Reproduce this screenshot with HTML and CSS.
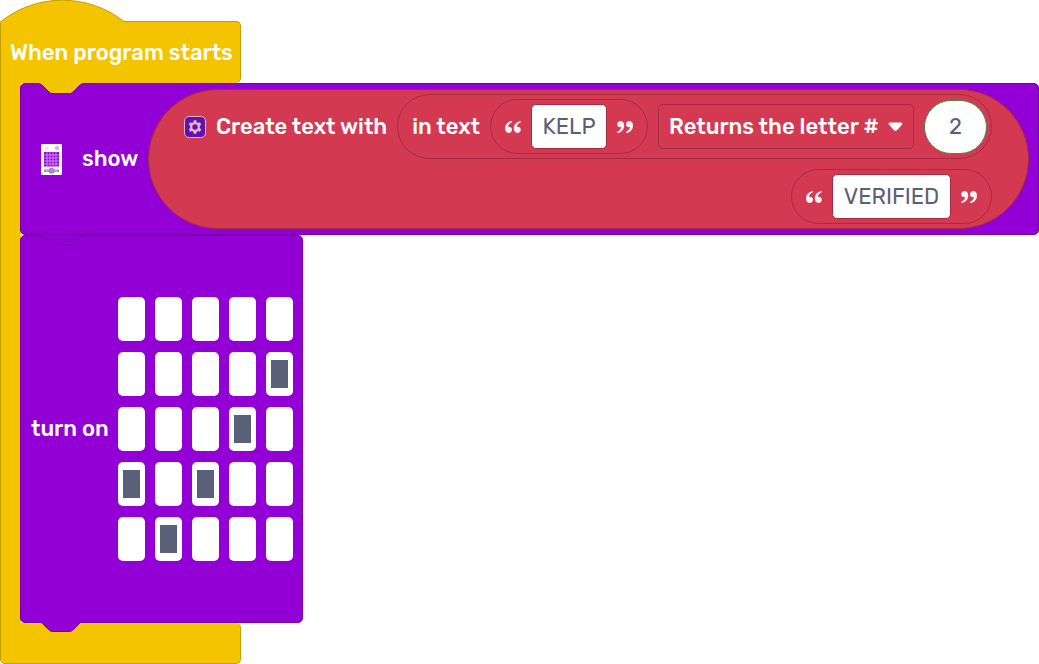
FILE: index.html
```html
<!DOCTYPE html>
<html lang="en">
<head>
<meta charset="utf-8">
<title>Block program</title>
<link rel="stylesheet" href="styles.css">
</head>
<body>
<svg class="symbols" width="0" height="0" aria-hidden="true">
  <symbol id="quote" viewBox="0 0 16 12">
    <path d="M6.800 0C2.600 .8 0 3.500 0 7.600C0 10.300 1.400 12 3.600 12C5.600 12 7 10.700 7 8.800C7 7 5.700 5.800 3.900 5.800C3.600 5.800 3.300 5.800 3 5.900C3.400 3.700 4.700 2.200 7.200 1.100Z"/>
    <path d="M15.600 0C11.400 .8 8.800 3.500 8.800 7.600C8.800 10.300 10.200 12 12.400 12C14.400 12 15.800 10.700 15.800 8.800C15.800 7 14.500 5.800 12.700 5.800C12.400 5.800 12.100 5.800 11.800 5.900C12.200 3.700 13.500 2.200 16 1.100Z"/>
  </symbol>
  <symbol id="tab" viewBox="0 0 48 12">
    <path stroke="none" d="M0 0V0.500C4 0.500 5 2 7 4L11 8C13 10 14 10.500 16 10.500H32C34 10.500 35 10 37 8L41 4C43 2 44 0.500 48 0.500V0Z"/>
    <path fill="none" d="M0 0.500C4 0.500 5 2 7 4L11 8C13 10 14 10.500 16 10.500H32C34 10.500 35 10 37 8L41 4C43 2 44 0.500 48 0.500"/>
  </symbol>
</svg>
<main class="program">
  <svg class="cap" width="126" height="23" viewBox="0 0 126 23" aria-hidden="true">
    <path class="cap-fill" d="M0 23V22C36 -7 88 -7 124 21.500H126V23Z"/>
    <path class="cap-line" d="M0.500 22C36 -7 88 -7 124 21.500H126"/>
  </svg>
  <header class="hat">When program starts</header>
  <div class="stack">
    <section class="block block-show">
      <svg class="tab tab-start" width="48" height="12" aria-hidden="true"><use href="#tab"/></svg>
      <svg class="device" width="21" height="31" viewBox="0 0 21 31" role="img" aria-label="LED device">
        <rect width="21" height="31" rx="1" fill="#fff"/>
        <rect x="4" y="2.500" width="3.500" height="3.500" fill="#e6e6e6"/>
        <circle cx="16" cy="4" r="1.700" fill="#d9b3ee" stroke="#aaa" stroke-width=".6"/>
        <rect x="3" y="8" width="15" height="14.500" fill="#9400d8"/>
        <path d="M6 8v14.500M9 8v14.500M12 8v14.500M15 8v14.500M3 11h15M3 14h15M3 17h15M3 20h15" stroke="#d9a6f2" stroke-width=".8"/>
        <path d="M3 26.700h15" stroke="#999" stroke-width="2.600"/>
        <path d="M5 26.700h11" stroke="#ccc" stroke-width="1"/>
        <circle cx="10.500" cy="26.700" r="2.600" fill="#c57ae8" stroke="#8c6a9c" stroke-width=".6"/>
        <path d="M.5 1.200h1M19.500 1.200h1M.5 29.700h1M19.500 29.700h1" stroke="#9a9a9a"/>
      </svg>
      <span class="label">show</span>
      <div class="join">
        <div class="join-row">
          <button class="gear" type="button" aria-label="Edit items">
            <svg width="14" height="14" viewBox="0 0 14 14" aria-hidden="true">
              <path fill="#f0b3bd" fill-rule="evenodd" d="M5.700 .3h2.600l.4 1.900 1.300 .8 1.900-.7 1.300 2.300-1.400 1.300v2.200l1.400 1.300-1.300 2.300-1.900-.7-1.300 .8-.4 1.900H5.700l-.4-1.900-1.300-.8-1.900 .7L.8 9.400l1.400-1.300V5.900L.8 4.600l1.300-2.300 1.900 .7 1.300-.8ZM7 4.300a2.700 2.700 0 1 0 0 5.400 2.700 2.700 0 0 0 0-5.400Z"/>
            </svg>
          </button>
          <span class="label">Create text with</span>
          <div class="pill pill-outer">
            <span class="label">in text</span>
            <div class="pill">
              <svg class="quote" width="16" height="12" aria-hidden="true"><use href="#quote"/></svg>
              <input class="field field-short" type="text" value="KELP" aria-label="Source text">
              <svg class="quote quote-end" width="16" height="12" aria-hidden="true"><use href="#quote"/></svg>
            </div>
            <div class="choice">
              <select class="select" aria-label="Text operation"><option>Returns the letter #</option></select>
              <svg class="arrow" width="15" height="10" viewBox="0 0 15 10" aria-hidden="true"><path d="M2 .5h11c1.400 0 1.900 1.300 1 2.300L9 8.300c-.9 1-2.100 1-3 0L1 2.800C.1 1.800.6 .5 2 .5Z" fill="#fff"/></svg>
            </div>
            <input class="field number" type="text" inputmode="numeric" value="2" aria-label="Letter position">
          </div>
        </div>
        <div class="join-row">
          <div class="pill">
            <svg class="quote" width="16" height="12" aria-hidden="true"><use href="#quote"/></svg>
            <input class="field field-long" type="text" value="VERIFIED" aria-label="Appended text">
            <svg class="quote quote-end" width="16" height="12" aria-hidden="true"><use href="#quote"/></svg>
          </div>
        </div>
      </div>
    </section>
    <section class="block block-leds">
      <svg class="tab" width="48" height="12" aria-hidden="true"><use href="#tab"/></svg>
      <span class="label">turn on</span>
      <div class="leds">
        <input class="led" type="checkbox" aria-label="Row 1, column 1"><input class="led" type="checkbox" aria-label="Row 1, column 2"><input class="led" type="checkbox" aria-label="Row 1, column 3"><input class="led" type="checkbox" aria-label="Row 1, column 4"><input class="led" type="checkbox" aria-label="Row 1, column 5">
        <input class="led" type="checkbox" aria-label="Row 2, column 1"><input class="led" type="checkbox" aria-label="Row 2, column 2"><input class="led" type="checkbox" aria-label="Row 2, column 3"><input class="led" type="checkbox" aria-label="Row 2, column 4"><input class="led" type="checkbox" aria-label="Row 2, column 5" checked>
        <input class="led" type="checkbox" aria-label="Row 3, column 1"><input class="led" type="checkbox" aria-label="Row 3, column 2"><input class="led" type="checkbox" aria-label="Row 3, column 3"><input class="led" type="checkbox" aria-label="Row 3, column 4" checked><input class="led" type="checkbox" aria-label="Row 3, column 5">
        <input class="led" type="checkbox" aria-label="Row 4, column 1" checked><input class="led" type="checkbox" aria-label="Row 4, column 2"><input class="led" type="checkbox" aria-label="Row 4, column 3" checked><input class="led" type="checkbox" aria-label="Row 4, column 4"><input class="led" type="checkbox" aria-label="Row 4, column 5">
        <input class="led" type="checkbox" aria-label="Row 5, column 1"><input class="led" type="checkbox" aria-label="Row 5, column 2" checked><input class="led" type="checkbox" aria-label="Row 5, column 3"><input class="led" type="checkbox" aria-label="Row 5, column 4"><input class="led" type="checkbox" aria-label="Row 5, column 5">
      </div>
      <svg class="tab tab-end" width="48" height="12" aria-hidden="true"><use href="#tab"/></svg>
    </section>
  </div>
  <div class="foot"></div>
</main>
</body>
</html>
```
FILE: styles.css
```css
:root {
  --yellow: #f5c400;
  --yellow-edge: #c49d00;
  --purple: #9200d6;
  --purple-edge: #7500ab;
  --red: #d33a51;
  --red-edge: #a32c40;
  --ink: #5b6079;
}

* { box-sizing: border-box; }

body {
  margin: 0;
  background: #fff;
  color: #fff;
  font: 500 22px/26px Rubik, Inter, sans-serif;
}

.symbols { position: absolute; }

.cap { display: block; position: relative; margin-bottom: -2px; }
.cap-fill { fill: var(--yellow); }
.cap-line { fill: none; stroke: var(--yellow-edge); }

.hat {
  width: 241px;
  padding: 18px 9px 17px;
  background: var(--yellow);
  border: 1px solid var(--yellow-edge);
  border-bottom: 0;
  border-radius: 0 5px 5px 0;
  white-space: nowrap;
}

.stack {
  padding-left: 20px;
  background: linear-gradient(to right, var(--yellow-edge) 1px, var(--yellow) 1px 21px, transparent 21px);
}

.foot {
  width: 241px;
  height: 41px;
  background: var(--yellow);
  border: 1px solid var(--yellow-edge);
  border-top: 0;
  border-radius: 0 5px 5px 5px;
}

.block {
  position: relative;
  display: flex;
  align-items: center;
  background: var(--purple);
  border: 1px solid var(--purple-edge);
  border-radius: 5px;
}

.block-show { padding: 5px 9px 5px 20px; }
.block-show > .label { margin: 0 10px 0 20px; }

.block-leds {
  width: fit-content;
  gap: 9px;
  padding: 61px 9px 61px 10px;
}

.tab {
  position: absolute;
  top: -1px;
  left: 16px;
  fill: var(--purple);
  stroke: var(--purple-edge);
}
.tab-start { fill: var(--yellow); }
.tab-end { top: auto; bottom: -11px; }

.device { flex: none; }
.label { white-space: nowrap; }

.join {
  flex: 1;
  display: flex;
  flex-direction: column;
  align-items: flex-end;
  gap: 10px;
  padding: 4px 36px 4px 20px;
  background: var(--red);
  border: 1px solid var(--red-edge);
  border-radius: 70px;
}

.join-row { display: flex; align-items: center; gap: 10px; }

.gear {
  display: grid;
  place-items: center;
  width: 22px;
  height: 22px;
  padding: 0;
  background: #5a14b8;
  border: 1px solid #f0b3bd;
  border-radius: 5px;
}

.pill {
  display: flex;
  align-items: center;
  gap: 10px;
  padding: 4px 14px;
  border: 1px solid var(--red-edge);
  border-radius: 33px;
}

.pill-outer { padding: 4px; padding-left: 14px; }

.quote { flex: none; fill: #fdf0f2; }
.quote-end { transform: rotate(180deg); }

.field {
  height: 45px;
  padding: 0;
  background: #fff;
  border: 1px solid var(--red-edge);
  border-radius: 5px;
  color: var(--ink);
  font: inherit;
  font-weight: 400;
  text-align: center;
}

.field-short { width: 76px; }
.field-long { width: 119px; }
.number {
  width: 63px;
  height: 54px;
  border-color: #3f9142;
  border-radius: 27px;
}

.choice { position: relative; }

.select {
  display: block;
  width: 256px;
  height: 45px;
  padding: 0 10px;
  appearance: none;
  background: transparent;
  border: 1px solid var(--red-edge);
  border-radius: 5px;
  color: inherit;
  font: inherit;
}

.arrow { position: absolute; top: 18px; right: 11px; pointer-events: none; }

.leds {
  display: grid;
  grid-template-columns: repeat(5, 27px);
  gap: 11px 10px;
}

.led {
  display: grid;
  place-items: center;
  width: 27px;
  height: 44px;
  margin: 0;
  appearance: none;
  background: #fff;
  border-radius: 5px;
}

.led:checked::before {
  content: "";
  width: 17px;
  height: 28px;
  background: var(--ink);
}
```
